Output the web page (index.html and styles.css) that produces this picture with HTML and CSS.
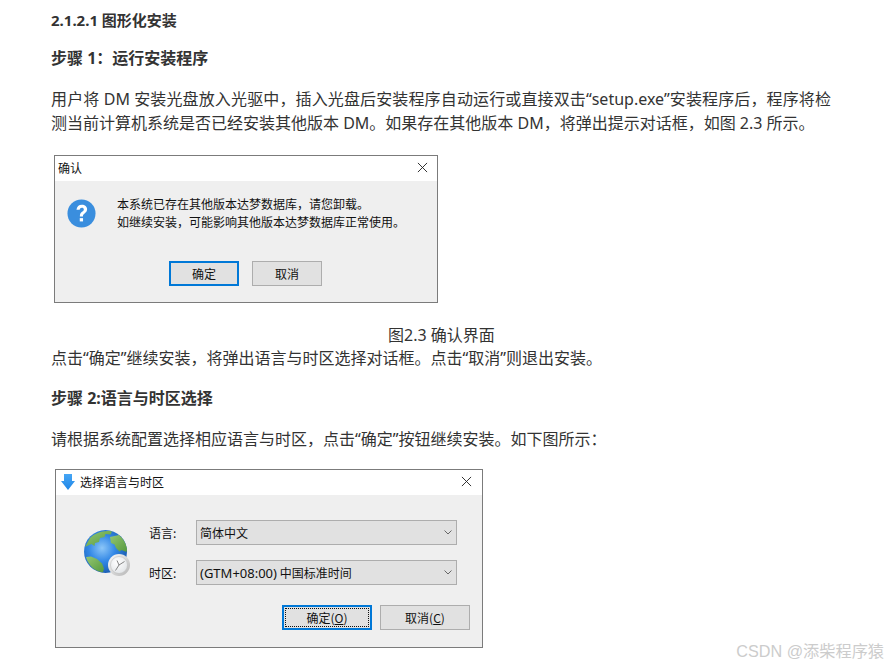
FILE: index.html
```html
<!DOCTYPE html>
<html lang="zh-CN">
<head>
<meta charset="utf-8">
<title>图形化安装</title>
<link rel="stylesheet" href="styles.css">
</head>
<body>
<main class="article">
  <h4 class="h-sub">2.1.2.1 图形化安装</h4>
  <h5 class="h-step first">步骤 1：运行安装程序</h5>
  <p class="para justify">用户将 DM 安装光盘放入光驱中，插入光盘后安装程序自动运行或直接双击“setup.exe”安装程序后，程序将检测当前计算机系统是否已经安装其他版本 DM。如果存在其他版本 DM，将弹出提示对话框，如图 2.3 所示。</p>

  <section class="dialog confirm">
    <header class="title-bar">
      <span class="title">确认</span>
      <svg class="close" viewBox="0 0 12 12"><path d="M1 1l10 10M11 1L1 11"/></svg>
    </header>
    <div class="confirm-body">
      <div class="confirm-msg">
        <svg class="q-icon" viewBox="0 0 30 30"><circle cx="15" cy="15" r="14.5" fill="#3a8ede"/><path d="M9.800 11.200c.3-3.200 2.400-5.200 5.600-5.200 3.200 0 5.400 1.900 5.400 4.700 0 2-1.100 3.200-2.600 4.300-1.300 1-1.700 1.600-1.700 3h-3.200c0-2.400.8-3.500 2.300-4.700 1.100-.8 1.800-1.500 1.800-2.500 0-1.100-.8-1.800-2-1.800-1.300 0-2.100.8-2.300 2.200z" fill="#fff"/><rect x="13.200" y="19.800" width="3.400" height="3.400" fill="#fff"/></svg>
        <div class="msg-text">
          <div>本系统已存在其他版本达梦数据库，请您卸载。</div>
          <div>如继续安装，可能影响其他版本达梦数据库正常使用。</div>
        </div>
      </div>
      <div class="btn-row confirm-btns">
        <button class="btn primary">确定</button>
        <button class="btn">取消</button>
      </div>
    </div>
  </section>

  <p class="caption">图2.3 确认界面</p>
  <p class="para">点击“确定”继续安装，将弹出语言与时区选择对话框。点击“取消”则退出安装。</p>
  <h5 class="h-step">步骤 2:语言与时区选择</h5>
  <p class="para">请根据系统配置选择相应语言与时区，点击“确定”按钮继续安装。如下图所示：</p>

  <section class="dialog lang">
    <header class="title-bar">
      <svg class="arrow" viewBox="0 0 14 16"><defs><linearGradient id="arr" x1="0" y1="0" x2="0" y2="1"><stop offset="0" stop-color="#46a6f5"/><stop offset="1" stop-color="#1f86e6"/></linearGradient></defs><path d="M3 0h8v7h3l-7 9-7-9h3z" fill="url(#arr)"/></svg>
      <span class="title">选择语言与时区</span>
      <svg class="close" viewBox="0 0 12 12"><path d="M1 1l10 10M11 1L1 11"/></svg>
    </header>
    <div class="lang-body">
      <div class="lang-main">
        <svg class="globe" viewBox="0 0 46 46">
          <defs>
            <radialGradient id="sea" cx="42%" cy="42%" r="62%"><stop offset="0" stop-color="#8cc6f8"/><stop offset=".5" stop-color="#3388e6"/><stop offset="1" stop-color="#1a5cb0"/></radialGradient>
            <linearGradient id="land" x1="0" y1="0" x2="1" y2="1"><stop offset="0" stop-color="#94c672"/><stop offset="1" stop-color="#569a3e"/></linearGradient>
            <linearGradient id="rim" x1="0" y1="0" x2="1" y2="1"><stop offset="0" stop-color="#fdfdfd"/><stop offset="1" stop-color="#b4b4b4"/></linearGradient>
            <radialGradient id="face" cx="40%" cy="35%" r="75%"><stop offset="0" stop-color="#fff"/><stop offset="1" stop-color="#dfe2e5"/></radialGradient>
          </defs>
          <circle cx="21.500" cy="21.500" r="21.500" fill="url(#sea)"/>
          <path d="M6 8c5-5 14-8 22-6.500l-1.500 3-5-.5-1 3-4.500 1-1 4-4 1-.5 3-3-2-4.500 2-2 1z" fill="url(#land)"/>
          <path d="M26 7l9-2c4 3.500 7 8 8 14l-.5 3-5-2-2 1.500-3.500-3.500-1.500-3.500-3.500-1.500z" fill="url(#land)"/>
          <path d="M2 27l5-.5 6 2.500 5 4.500 2 5-1 3.800C11 41.500 4.500 36 2 27z" fill="url(#land)"/>
          <circle cx="35" cy="35" r="11" fill="url(#rim)"/>
          <circle cx="35" cy="35" r="8.500" fill="url(#face)" stroke="#c0c0c0" stroke-width=".6"/>
          <path d="M35 35l5.500-3.500M35 35l-3.500 5.500M35 35l-2-4.500" stroke="#666" stroke-width=".8" fill="none"/>
        </svg>
        <div class="form">
          <div class="field">
            <label class="field-label">语言:</label>
            <div class="select"><span>简体中文</span><svg class="chev" viewBox="0 0 8 5"><path d="M.5.5L4 4 7.500.5"/></svg></div>
          </div>
          <div class="field">
            <label class="field-label">时区:</label>
            <div class="select"><span><span class="latin">(GTM+08:00)</span> 中国标准时间</span><svg class="chev" viewBox="0 0 8 5"><path d="M.5.5L4 4 7.500.5"/></svg></div>
          </div>
        </div>
      </div>
      <div class="btn-row lang-btns">
        <button class="btn primary focus"><span class="focus-in">确定(<u>O</u>)</span></button>
        <button class="btn">取消(<u>C</u>)</button>
      </div>
    </div>
  </section>
</main>
<div class="watermark">CSDN @添柴程序猿</div>
</body>
</html>
```
FILE: styles.css
```css
* { box-sizing: border-box; }
html, body { margin: 0; padding: 0; }
body {
  width: 888px;
  height: 665px;
  overflow: hidden;
  background: #fff;
  position: relative;
  color: #333;
  font-family: "Noto Sans", "Noto Sans CJK SC", sans-serif;
}
.article { padding: 0 0 0 51px; width: 831px; }
.h-sub {
  margin: 0;
  padding-top: 10px;
  font-size: 15px;
  line-height: 20px;
  font-weight: 700;
}
.h-step {
  margin: 0;
  font-size: 16px;
  line-height: 24px;
  font-weight: 700;
}
.h-step.first { margin-top: 16px; }
.para {
  margin: 0;
  font-size: 16px;
  line-height: 24px;
}
.justify { text-align: justify; }
.h-step + .para { margin-top: 17px; }
.dialog {
  border: 1px solid #7b7b7b;
  background: #efefef;
  color: #111;
  font-size: 12px;
  font-family: "Noto Sans CJK SC", sans-serif;
}
.title-bar {
  display: flex;
  align-items: center;
  height: 25px;
  background: #fff;
  padding: 0 9px 2px 3px;
}
.title { flex: 1; font-size: 12px; line-height: 16px; }
.close { width: 11px; height: 11px; fill: none; stroke: #222; stroke-width: 1; }
.confirm { width: 384px; height: 148px; margin: 20px 0 0 3px; }
.confirm-body { padding: 14px 0 0 12px; }
.confirm-msg { display: flex; align-items: flex-start; }
.q-icon { width: 29px; height: 29px; margin-top: 4px; }
.msg-text { margin-left: 21px; font-size: 12px; line-height: 18px; }
.btn-row { display: flex; }
.confirm-btns { margin: 30px 0 0 102px; gap: 13px; }
.btn {
  width: 70px;
  height: 25px;
  padding: 0;
  background: #e1e1e1;
  border: 1px solid #adadad;
  font: 12px/1 "Noto Sans CJK SC", sans-serif;
  color: #111;
}
.btn.primary { border: 2px solid #0078d7; }
.caption {
  margin: 22px 0 0;
  padding-left: 337px;
  font-size: 16px;
  line-height: 20px;
}
.caption + .para { line-height: 26px; }
.para + .h-step { margin-top: 15px; }
.lang { width: 428px; height: 179px; margin: 18px 0 0 4px; }
.lang .title-bar { padding: 0 10px 2px 5px; }
.arrow { width: 14px; height: 16px; margin-right: 5px; }
.lang-body { padding: 25px 12px 0 28px; }
.lang-main { display: flex; }
.globe { width: 46px; height: 46px; margin-top: 10px; }
.form { margin-left: 19px; flex: 1; display: flex; flex-direction: column; gap: 15px; }
.field { display: flex; align-items: center; }
.field-label { width: 47px; font-size: 12px; }
.select {
  width: 261px;
  height: 25px;
  padding: 0 4px 0 3px;
  display: flex;
  align-items: center;
  justify-content: space-between;
  background: #e1e1e1;
  border: 1px solid #adadad;
  font-size: 12px;
}
.latin { font-family: "Noto Sans", sans-serif; font-size: 13px; }
.chev { width: 8px; height: 5px; fill: none; stroke: #666; stroke-width: 1; }
.lang-btns { margin: 20px 0 0 198px; gap: 8px; }
.lang-btns .btn { width: 90px; }
.focus { padding: 1px; }
.focus-in {
  display: flex;
  align-items: center;
  justify-content: center;
  height: 100%;
  border: 1px dotted #111;
}
.watermark {
  position: absolute;
  right: 4px;
  bottom: 4px;
  font-family: "Liberation Sans", "Noto Sans CJK SC", sans-serif;
  font-size: 16.200px;
  line-height: 20px;
  color: #ccc;
}
```
